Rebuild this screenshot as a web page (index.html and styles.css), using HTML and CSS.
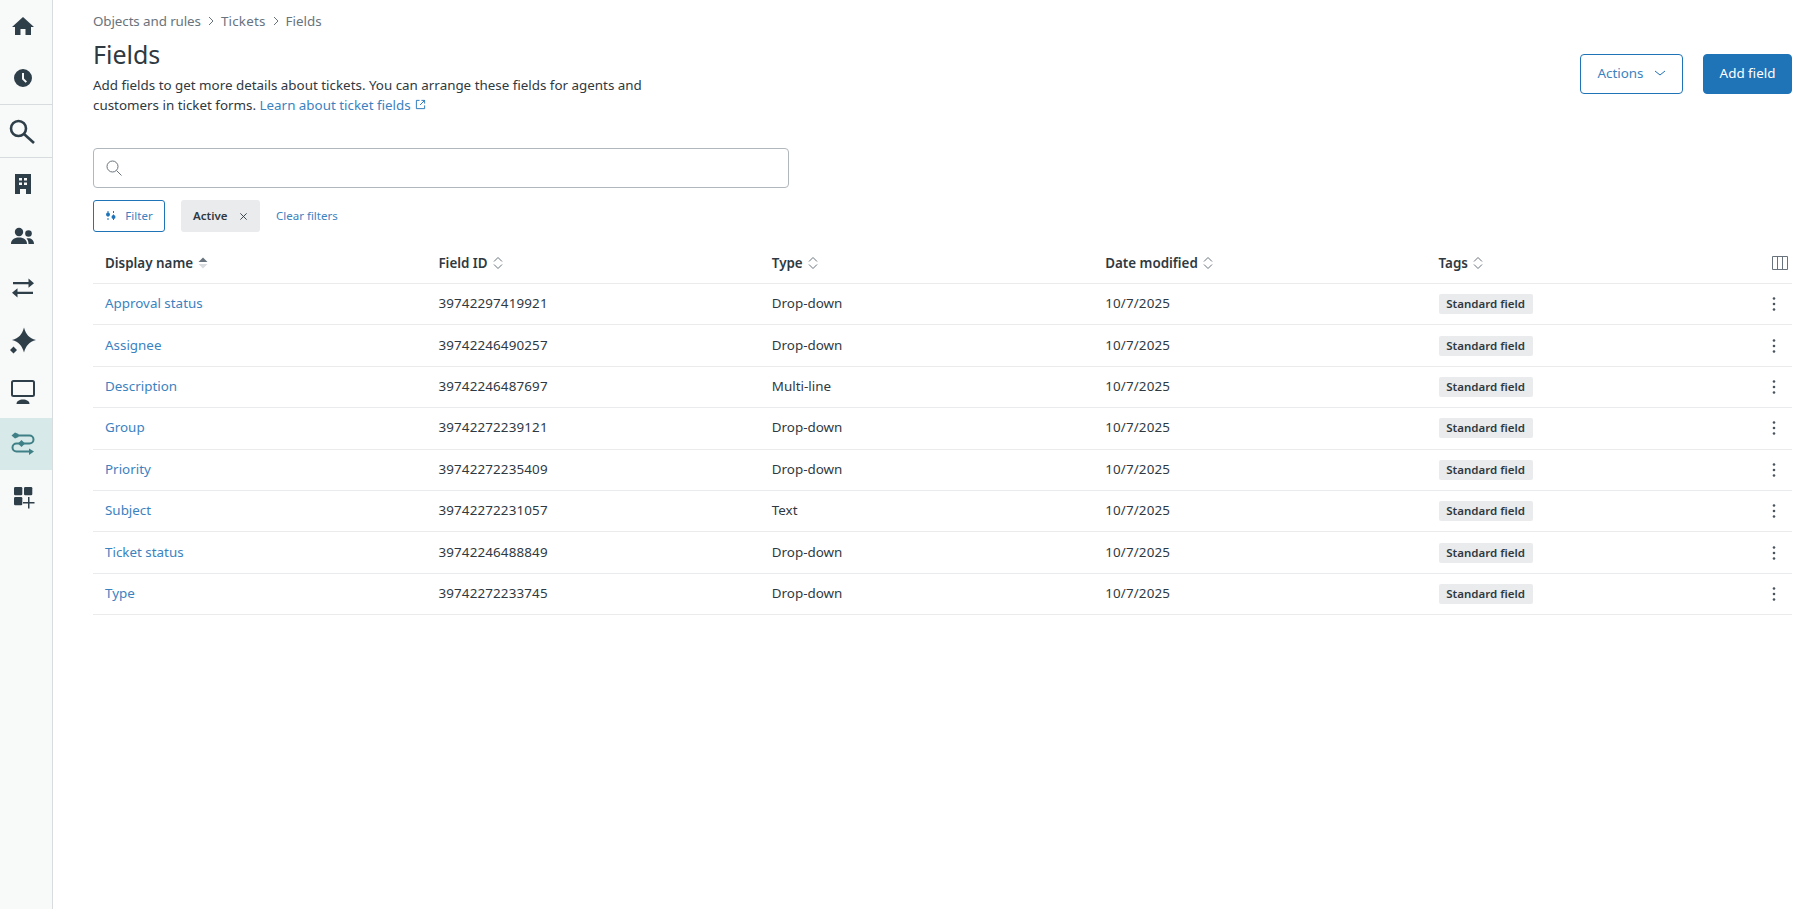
FILE: index.html
```html
<!DOCTYPE html>
<html lang="en">
<head>
<meta charset="utf-8">
<title>Fields</title>
<link rel="stylesheet" href="styles.css">
</head>
<body>
<div class="app">
  <nav class="rail">
    <a class="rail-item"><svg class="ico" viewBox="0 0 24 24"><path d="M12 3 23 13h-3v8h-5.500v-6h-5v6H4v-8H1z"/></svg></a>
    <a class="rail-item rail-tall rail-sep"><svg class="ico" viewBox="0 0 24 24"><path fill-rule="evenodd" d="M12 3a9 9 0 1 0 0 18 9 9 0 0 0 0-18zm-1 4h2v5.400l3 3-1.400 1.400-3.600-3.600z"/></svg></a>
    <a class="rail-item rail-tall rail-sep"><svg class="ico" viewBox="0 0 24 24"><circle class="line" cx="7.500" cy="9.500" r="7.500"/><path class="line" d="M13 15l10 9"/></svg></a>
    <a class="rail-item"><svg class="ico" viewBox="0 0 24 24"><path fill-rule="evenodd" d="M4 2h16v20h-5v-5H9v5H4zM8 6v2.500h3V6zm5 0v2.500h3V6zm-5 4.500V13h3v-2.500zm5 0V13h3v-2.500z"/></svg></a>
    <a class="rail-item"><svg class="ico" viewBox="0 0 24 24"><circle cx="8" cy="8" r="4.200"/><circle cx="17.500" cy="9.500" r="3.300"/><path d="M0 20c0-4 3-6.500 8-6.500S16 16 16 20zM17.500 20c0-2.500-.7-4.500-2-5.500 3.500-.9 7.500.8 7.500 5.500z"/></svg></a>
    <a class="rail-item"><svg class="ico" viewBox="0 0 24 24"><path d="M2 6h15.500V2.500L23 7.300l-5.500 4.500V8.300H2zM1 16.700l5.500-4.500v3.500H22V18H6.500v3.500z"/></svg></a>
    <a class="rail-item"><svg class="ico" viewBox="0 0 24 24"><path d="M13 -.5C15 6.500 18 10 25 12 18 14 15 17.500 13 24.500 11 17.500 8 14 1 12 8 10 11 6.500 13 -.5zM2.500 18.500l3.500 3.500-3.500 3.500L-1 22z"/></svg></a>
    <a class="rail-item"><svg class="ico" viewBox="0 0 24 24"><rect class="thin" x="1" y="1" width="22" height="15" rx="1.500"/><path d="M5.500 24c0-3 3-4.500 6.500-4.500s6.500 1.500 6.500 4.500z"/></svg></a>
    <a class="rail-item rail-active"><svg class="ico ico-teal" viewBox="0 0 24 24"><path class="thin" d="M6 3.500h12.500a3.800 3.800 0 0 1 0 8H5.500a3.800 3.800 0 0 0 0 8H19"/><path d="M.5 3.500 4 .5 7.500 2v3L4 6.500zM7 11.500 10.500 8l3.500 3.500-3.500 3.500zM18 16.500l5 3-5 3.500z"/></svg></a>
    <a class="rail-item"><svg class="ico" viewBox="0 0 24 24"><rect x="3" y="3" width="8.300" height="8.300" rx="1.200"/><rect x="13" y="3" width="8.300" height="8.300" rx="1.200"/><rect x="3" y="13" width="8.300" height="8.300" rx="1.200"/><path d="M17 13h1.500v5H23.500v1.500h-5v5H17v-5h-5V18h5z"/></svg></a>
  </nav>
  <main class="page">
    <div class="crumbs">
      <span class="crumb-a">Objects and rules</span>
      <svg class="crumb-gt" viewBox="0 0 12 12"><path d="M4 2l4 4-4 4"/></svg>
      <span class="crumb-b">Tickets</span>
      <svg class="crumb-gt" viewBox="0 0 12 12"><path d="M4 2l4 4-4 4"/></svg>
      <span>Fields</span>
    </div>
    <header class="head">
      <div class="head-text">
        <h1>Fields</h1>
        <p>Add fields to get more details about tickets. You can arrange these fields for agents and customers in ticket forms. <a class="link">Learn about ticket fields<svg class="ext" viewBox="0 0 12 12"><path d="M5 1.500H1.500v9h9V7M7 1.500h3.500V5M10.500 1.500 5.500 6.500"/></svg></a></p>
      </div>
      <div class="head-actions">
        <button class="btn btn-line">Actions<svg class="chev" viewBox="0 0 12 12"><path d="M1 4l5 4 5-4"/></svg></button>
        <button class="btn btn-solid">Add field</button>
      </div>
    </header>
    <div class="search"><svg class="search-ico" viewBox="0 0 16 16"><circle cx="6.500" cy="6.500" r="5.500"/><path d="M10.500 10.500 15.500 15.500"/></svg></div>
    <div class="filters">
      <button class="filter-btn"><svg class="filter-ico" viewBox="0 0 12 12"><path class="s" d="M3 1v10M8.500 1v10"/><circle cx="3" cy="4.500" r="2"/><circle cx="8.500" cy="7" r="2"/></svg>Filter</button>
      <span class="chip">Active<svg class="chip-x" viewBox="0 0 10 10"><path d="M1.500 1.500l7 7M8.500 1.500l-7 7"/></svg></span>
      <a class="link clear">Clear filters</a>
    </div>
    <div class="table">
      <div class="row row-head">
        <div class="cell">Display name<svg class="sort" viewBox="0 0 12 14"><path class="up" d="M6 1.500l4.500 4.500h-9z"/><path class="dn" d="M1.500 8h9L6 12.500z"/></svg></div>
        <div class="cell">Field ID<svg class="sort" viewBox="0 0 12 14"><path class="o" d="M2 5.500l4-4 4 4M2 8.500l4 4 4-4"/></svg></div>
        <div class="cell">Type<svg class="sort" viewBox="0 0 12 14"><path class="o" d="M2 5.500l4-4 4 4M2 8.500l4 4 4-4"/></svg></div>
        <div class="cell">Date modified<svg class="sort" viewBox="0 0 12 14"><path class="o" d="M2 5.500l4-4 4 4M2 8.500l4 4 4-4"/></svg></div>
        <div class="cell">Tags<svg class="sort" viewBox="0 0 12 14"><path class="o" d="M2 5.500l4-4 4 4M2 8.500l4 4 4-4"/></svg></div>
        <div class="cell-end"><svg class="cols" viewBox="0 0 16 14"><path d="M.5.500h15v13H.5zM5.500.500v13M10.500.500v13"/></svg></div>
      </div>
      <div class="row"><div class="cell"><a class="link">Approval status</a></div><div class="cell num">39742297419921</div><div class="cell">Drop-down</div><div class="cell num">10/7/2025</div><div class="cell"><span class="tag">Standard field</span></div><div class="cell-end"><svg class="more" viewBox="0 0 4 16"><circle cx="2" cy="2.500" r="1.300"/><circle cx="2" cy="8" r="1.300"/><circle cx="2" cy="13.500" r="1.300"/></svg></div></div>
      <div class="row"><div class="cell"><a class="link">Assignee</a></div><div class="cell num">39742246490257</div><div class="cell">Drop-down</div><div class="cell num">10/7/2025</div><div class="cell"><span class="tag">Standard field</span></div><div class="cell-end"><svg class="more" viewBox="0 0 4 16"><circle cx="2" cy="2.500" r="1.300"/><circle cx="2" cy="8" r="1.300"/><circle cx="2" cy="13.500" r="1.300"/></svg></div></div>
      <div class="row"><div class="cell"><a class="link">Description</a></div><div class="cell num">39742246487697</div><div class="cell">Multi-line</div><div class="cell num">10/7/2025</div><div class="cell"><span class="tag">Standard field</span></div><div class="cell-end"><svg class="more" viewBox="0 0 4 16"><circle cx="2" cy="2.500" r="1.300"/><circle cx="2" cy="8" r="1.300"/><circle cx="2" cy="13.500" r="1.300"/></svg></div></div>
      <div class="row"><div class="cell"><a class="link">Group</a></div><div class="cell num">39742272239121</div><div class="cell">Drop-down</div><div class="cell num">10/7/2025</div><div class="cell"><span class="tag">Standard field</span></div><div class="cell-end"><svg class="more" viewBox="0 0 4 16"><circle cx="2" cy="2.500" r="1.300"/><circle cx="2" cy="8" r="1.300"/><circle cx="2" cy="13.500" r="1.300"/></svg></div></div>
      <div class="row"><div class="cell"><a class="link">Priority</a></div><div class="cell num">39742272235409</div><div class="cell">Drop-down</div><div class="cell num">10/7/2025</div><div class="cell"><span class="tag">Standard field</span></div><div class="cell-end"><svg class="more" viewBox="0 0 4 16"><circle cx="2" cy="2.500" r="1.300"/><circle cx="2" cy="8" r="1.300"/><circle cx="2" cy="13.500" r="1.300"/></svg></div></div>
      <div class="row"><div class="cell"><a class="link">Subject</a></div><div class="cell num">39742272231057</div><div class="cell">Text</div><div class="cell num">10/7/2025</div><div class="cell"><span class="tag">Standard field</span></div><div class="cell-end"><svg class="more" viewBox="0 0 4 16"><circle cx="2" cy="2.500" r="1.300"/><circle cx="2" cy="8" r="1.300"/><circle cx="2" cy="13.500" r="1.300"/></svg></div></div>
      <div class="row"><div class="cell"><a class="link">Ticket status</a></div><div class="cell num">39742246488849</div><div class="cell">Drop-down</div><div class="cell num">10/7/2025</div><div class="cell"><span class="tag">Standard field</span></div><div class="cell-end"><svg class="more" viewBox="0 0 4 16"><circle cx="2" cy="2.500" r="1.300"/><circle cx="2" cy="8" r="1.300"/><circle cx="2" cy="13.500" r="1.300"/></svg></div></div>
      <div class="row"><div class="cell"><a class="link">Type</a></div><div class="cell num">39742272233745</div><div class="cell">Drop-down</div><div class="cell num">10/7/2025</div><div class="cell"><span class="tag">Standard field</span></div><div class="cell-end"><svg class="more" viewBox="0 0 4 16"><circle cx="2" cy="2.500" r="1.300"/><circle cx="2" cy="8" r="1.300"/><circle cx="2" cy="13.500" r="1.300"/></svg></div></div>
    </div>
  </main>
</div>
</body>
</html>
```

FILE: styles.css
```css
* { box-sizing: border-box; }
html, body { margin: 0; height: 100%; background: #fff; overflow: hidden; }
body { font-family: "Noto Sans", "Open Sans", sans-serif; font-size: 14px; line-height: 20px; color: #2f3941; }
.app { display: flex; height: 909px; }

.rail { width: 53px; flex: none; background: #f8f9f9; border-right: 1px solid #d8dcde; display: flex; flex-direction: column; }
.rail-item { height: 52px; flex: none; display: flex; align-items: center; justify-content: center; padding-right: 6px; }
.rail-tall { height: 53px; }
.rail-sep { border-bottom: 1px solid #d8dcde; }
.rail-active { background: #d7e9e8; }
.ico { width: 24px; height: 24px; fill: #2f3f4a; overflow: visible; }
.ico .line { fill: none; stroke: #2f3f4a; stroke-width: 2.600; }
.ico .thin { fill: none; stroke: #2f3f4a; stroke-width: 2; }
.ico-teal { fill: #3f8087; }
.ico-teal .thin { stroke: #3f8087; }

.page { flex: 1; min-width: 0; padding: 11px 9px 0 40px; }
.crumbs { display: flex; align-items: center; gap: 2px; height: 20px; color: #68737d; font-size: 13.400px; }
.crumb-a { letter-spacing: -.1px; }
.crumb-b { letter-spacing: .2px; }
.crumb-gt { width: 12px; height: 12px; margin: 0 2px; fill: none; stroke: #68737d; stroke-width: 1; }

.head { display: flex; justify-content: space-between; margin-top: 7px; }
.head-text { width: 560px; }
h1 { margin: 0; font-size: 25px; line-height: 32px; font-weight: 400; color: #2f3941; }
.head-text p { margin: 5px 0 0; font-size: 13.380px; line-height: 20px; }
.link { color: #3b82bf; text-decoration: none; }
.ext { width: 11px; height: 11px; margin-left: 4px; fill: none; stroke: #1f73b7; stroke-width: 1; }
.head-actions { display: flex; gap: 20px; margin-top: 16px; }
.btn { height: 40px; border-radius: 4px; font: inherit; font-size: 13.400px; padding: 0 0 2px; display: flex; align-items: center; justify-content: center; }
.btn-line { width: 103px; background: #fff; color: #3b82bf; border: 1px solid #1f73b7; }
.btn-solid { width: 89px; background: #1f73b7; color: #fff; border: 1px solid #1f73b7; }
.chev { width: 12px; height: 12px; margin-left: 10px; fill: none; stroke: #1f73b7; stroke-width: 1; }

.search { width: 696px; height: 40px; margin-top: 33px; border: 1px solid #b0b8be; border-radius: 4px; display: flex; align-items: center; padding-left: 12px; }
.search-ico { width: 16px; height: 16px; fill: none; stroke: #68737d; stroke-width: 1; }

.filters { display: flex; align-items: center; margin-top: 12px; height: 32px; }
.filter-btn { width: 72px; height: 32px; background: #fff; border: 1px solid #1f73b7; border-radius: 3px; color: #3b82bf; font: inherit; font-size: 11.500px; display: flex; align-items: center; justify-content: center; gap: 8px; padding: 0; }
.filter-ico { width: 12px; height: 12px; fill: #1f73b7; }
.filter-ico .s { fill: none; stroke: #1f73b7; stroke-width: 1; stroke-dasharray: 2 1.500; }
.chip { margin-left: 16px; width: 79px; height: 32px; background: #e9ebed; border-radius: 3px; font-size: 11.500px; font-weight: 600; display: flex; align-items: center; padding-left: 12px; gap: 12px; }
.chip-x { width: 9px; height: 9px; fill: none; stroke: #2f3941; stroke-width: 1; }
.clear { margin-left: 16px; font-size: 11.500px; }

.table { margin-top: 8px; }
.row { display: grid; grid-template-columns: repeat(5, 333.400px) 1fr; align-items: center; height: 41.400px; padding-bottom: 2px; border-bottom: 1px solid #e9ebed; font-size: 13.400px; }
.row-head { height: 44px; padding: 2px 0 0; font-weight: 600; }
.cell { padding-left: 12px; display: flex; align-items: center; }
.num { letter-spacing: .15px; }
.cell-end { display: flex; justify-content: flex-end; padding-right: 4px; }
.sort { width: 12px; height: 14px; margin-left: 4px; }
.sort .up { fill: #68737d; }
.sort .dn { fill: #d8dcde; }
.sort .o { fill: none; stroke: #68737d; stroke-width: 1; }
.cols { width: 16px; height: 14px; fill: none; stroke: #68737d; stroke-width: 1; }
.more { width: 4px; height: 16px; margin: 2px 12px 0 0; fill: #49545c; }
.tag { background: #e9ebed; border-radius: 2px; height: 20px; width: 94px; margin-top: 2px; display: flex; align-items: center; justify-content: center; font-size: 11.500px; font-weight: 600; }
```
